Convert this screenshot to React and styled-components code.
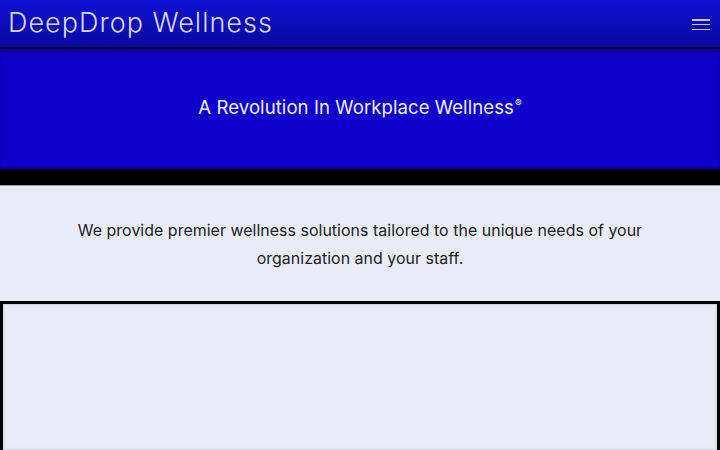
import React from "react";
import styled, { createGlobalStyle } from "styled-components";

const Global = createGlobalStyle`
  html, body { margin: 0; padding: 0; background: #e9ecf6; }
  body { font-family: "Inter", "Open Sans", sans-serif; overflow: hidden; }
  * { box-sizing: border-box; }
`;

const Header = styled.header`
  height: 49px;
  display: flex;
  align-items: center;
  justify-content: space-between;
  padding: 0 10px 0 8px;
  background: linear-gradient(180deg, #1010d2 0%, #0c0cb6 60%, #0808a0 100%);
  border-bottom: 2px solid #05052a;
`;

const Brand = styled.h1`
  margin: 0;
  font-weight: 300;
  font-size: 27px;
  letter-spacing: 1px;
  color: #d8d8f8;
  line-height: 1;
  padding-bottom: 3px;
`;

const Burger = styled.button`
  width: 18px;
  height: 11px;
  padding: 0;
  border: none;
  background: transparent;
  display: flex;
  flex-direction: column;
  justify-content: space-between;
  margin-top: 2px;
  span {
    display: block;
    height: 1.5px;
    background: #c8c8f2;
  }
`;

const Hero = styled.section`
  height: 120px;
  background: #1000cc;
  box-shadow: inset 0 8px 8px -6px rgba(0, 0, 40, 0.45), inset 0 -2px 2px -1px rgba(0, 0, 40, 0.5);
  display: flex;
  align-items: center;
  justify-content: center;
`;

const Tagline = styled.h2`
  margin: 0;
  font-weight: 400;
  font-size: 18.6px;
  letter-spacing: 0.05px;
  color: #eeeefc;
  padding-bottom: 4px;
  sup { font-size: 10px; vertical-align: 7px; margin-left: 1px; }
`;

const Band = styled.div`
  height: 17px;
  background: #000;
  border-bottom: 1px solid #9aa0ad;
`;

const Intro = styled.section`
  height: 115px;
  display: flex;
  align-items: center;
  justify-content: center;
  padding: 2px 60px 0;
`;

const Lead = styled.p`
  margin: 0;
  text-align: center;
  font-size: 15.9px;
  font-weight: 400;
  line-height: 28px;
  color: #222228;
  letter-spacing: 0.05px;
`;

const Panel = styled.section`
  height: 149px;
  border: 3px solid #050508;
  border-bottom: none;
  background: #e9ecf6;
  box-shadow: inset 0 0 2px 1px rgba(180, 190, 205, 0.6);
`;

export default function App() {
  return (
    <>
      <Global />
      <Header>
        <Brand>DeepDrop Wellness</Brand>
        <Burger aria-label="menu">
          <span />
          <span />
          <span />
        </Burger>
      </Header>
      <Hero>
        <Tagline>
          A Revolution In Workplace Wellness<sup>®</sup>
        </Tagline>
      </Hero>
      <Band />
      <Intro>
        <Lead>
          We provide premier wellness solutions tailored to the unique needs of your
          <br />
          organization and your staff.
        </Lead>
      </Intro>
      <Panel />
    </>
  );
}
